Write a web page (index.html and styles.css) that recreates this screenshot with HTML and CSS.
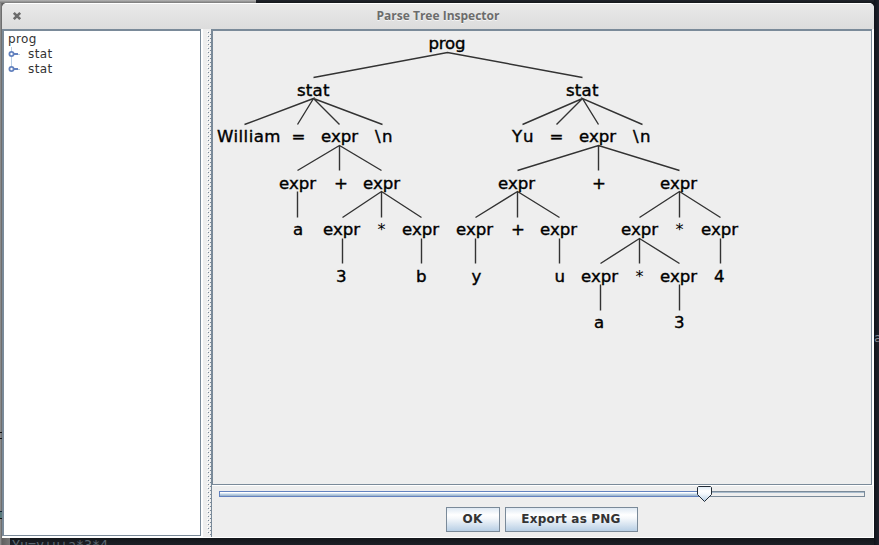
FILE: index.html
```
<!DOCTYPE html>
<html lang="en">
<head>
<meta charset="utf-8">
<title>Parse Tree Inspector</title>
<link rel="stylesheet" href="styles.css">
</head>
<body>
<div class="desktop">
  <div class="behind-light"></div>
  <div class="behind-marks"></div>
  <div class="behind-code">Yu=y+u+a*3*4</div>
  <div class="behind-char">a</div>
  <div class="window">
    <header class="titlebar">
      <svg class="close" width="10" height="10" viewBox="0 0 10 10"><path d="M1.8 1.8L8.2 8.2M8.2 1.8L1.8 8.2"/></svg>
      <h1>Parse Tree Inspector</h1>
    </header>
    <main class="content">
      <aside class="outline">
        <div class="row root">prog</div>
        <div class="row"><svg class="knob" width="12" height="15" viewBox="0 0 12 15"><path class="guide" d="M3.5 0V15"/><path class="arm" d="M5 7H10"/><path class="tip" d="M10 7.5H12"/><circle cx="3.5" cy="7" r="2.1"/></svg><span>stat</span></div>
        <div class="row"><svg class="knob" width="12" height="15" viewBox="0 0 12 15"><path class="guide" d="M3.5 0V7"/><path class="arm" d="M5 7H10"/><path class="tip" d="M10 7.5H12"/><circle cx="3.5" cy="7" r="2.1"/></svg><span>stat</span></div>
      </aside>
      <div class="divider"><svg width="5" height="504"><defs><pattern id="bumps" width="4" height="4" patternUnits="userSpaceOnUse" x="0" y="0"><path d="M1 1h1v1h-1zM3 3h1v1h-1z" fill="#7a8a99"/><path d="M0 0h1v1h-1zM2 2h1v1h-1z" fill="#fff"/></pattern></defs><rect width="5" height="504" fill="url(#bumps)"/></svg></div>
      <section class="viewer">
        <div class="canvas">
          <svg class="tree" width="658" height="453" viewBox="213 31 658 453">
            <g class="edges">
              <path d="M313.5 77.5L447.5 52.5L582.5 77.5"/>
              <path d="M244.5 124.5L313.5 98.5L297.5 124.5M339.5 124.5L313.5 98.5L382.5 124.5"/>
              <path d="M522.5 124.5L582.5 98.5L556.5 124.5M598.5 124.5L582.5 98.5L642.5 124.5"/>
              <path d="M297.5 170.5L339.5 145.5L381.5 170.5M339.5 145.5V170.5"/>
              <path d="M517.5 170.5L598.5 145.5L679.5 170.5M598.5 145.5V170.5"/>
              <path d="M297.5 191.5V217.5M342.5 217.5L381.5 191.5L421.5 217.5M381.5 191.5V217.5"/>
              <path d="M475.5 217.5L517.5 191.5L559.5 217.5M517.5 191.5V217.5"/>
              <path d="M639.5 217.5L679.5 191.5L720.5 217.5M679.5 191.5V217.5"/>
              <path d="M342.5 238.5V263.5M421.5 238.5V263.5M475.5 238.5V263.5M559.5 238.5V263.5M720.5 238.5V263.5"/>
              <path d="M600.5 263.5L639.5 238.5L679.5 263.5M639.5 238.5V263.5M600.5 284.5V310.5M679.5 284.5V310.5"/>
            </g>
            <g class="labels">
              <text x="428.5" y="49" textLength="37">prog</text>
              <text x="297" y="96" textLength="32.5">stat</text><text x="566" y="96" textLength="32.5">stat</text>
              <text x="217" y="142" textLength="63.5">William</text><text x="291.5" y="142">=</text><text x="321" y="142" textLength="37">expr</text><text x="375" y="142" textLength="17.5">\n</text>
              <text x="512" y="142" textLength="21.5">Yu</text><text x="549.5" y="142">=</text><text x="579" y="142" textLength="37">expr</text><text x="633" y="142" textLength="17.5">\n</text>
              <text x="279" y="189" textLength="37">expr</text><text x="334" y="189">+</text><text x="363" y="189" textLength="37">expr</text>
              <text x="498" y="189" textLength="37">expr</text><text x="592" y="189">+</text><text x="660" y="189" textLength="37">expr</text>
              <text x="293" y="235">a</text><text x="323" y="235" textLength="37">expr</text><text class="star" x="377.5" y="235">*</text><text x="402" y="235" textLength="37">expr</text>
              <text x="456" y="235" textLength="37">expr</text><text x="511" y="235">+</text><text x="540" y="235" textLength="37">expr</text>
              <text x="621" y="235" textLength="37">expr</text><text class="star" x="675.5" y="235">*</text><text x="701" y="235" textLength="37">expr</text>
              <text x="336" y="282">3</text><text x="416" y="282">b</text><text x="471.5" y="282">y</text><text x="554.5" y="282">u</text>
              <text x="581" y="282" textLength="37">expr</text><text class="star" x="635.5" y="282">*</text><text x="660" y="282" textLength="37">expr</text><text x="714" y="282">4</text>
              <text x="594" y="328">a</text><text x="674" y="328">3</text>
            </g>
          </svg>
        </div>
        <div class="slider">
          <div class="track"><div class="filled"></div></div>
          <svg class="thumb" width="15" height="17" viewBox="0 0 15 17"><defs><linearGradient id="tg" x1="0" y1="0" x2="0" y2="1"><stop offset="0" stop-color="#dce8f3"/><stop offset=".3" stop-color="#fff"/><stop offset=".5" stop-color="#f4f8fc"/><stop offset="1" stop-color="#b8cfe5"/></linearGradient></defs><path d="M1.5 .5H13.5L14.5 1.5V8.5L7.5 15.5L.5 8.5V1.5Z" fill="url(#tg)" stroke="#222b35"/></svg>
        </div>
        <div class="actions">
          <button class="ok">OK</button>
          <button class="export">Export as PNG</button>
        </div>
      </section>
    </main>
  </div>
</div>
</body>
</html>
```
FILE: styles.css
```
* { box-sizing: border-box; }
body { margin: 0; }
.desktop {
  position: relative;
  width: 879px;
  height: 545px;
  padding: 3px 0 0 2px;
  overflow: hidden;
  background: linear-gradient(90deg, transparent 874px, #10131a 874px, #1e212b 879px), linear-gradient(#20242b 0, #14171b 3px, #14171b 538px, #1c2026 545px);
}
.behind-light {
  position: absolute;
  left: 0;
  top: 0;
  width: 10px;
  height: 545px;
  background: linear-gradient(90deg, #999 0, #606060 2px, #777 10px);
}
.behind-light::after {
  content: "";
  position: absolute;
  left: 0;
  top: 0;
  width: 256px;
  height: 3px;
  background: linear-gradient(#b5b5b5, #777);
}
.behind-marks {
  position: absolute;
  left: 0;
  top: 432px;
  width: 2px;
  height: 87px;
  background: linear-gradient(#111 0 1px, transparent 1px 6px, #111 6px 7px, transparent 7px 79px, #123 79px 80px, #58797b 80px 86px, #111 86px);
}
.behind-code {
  position: absolute;
  left: 12px;
  top: 538px;
  font: 13.3px/16px "DejaVu Sans Mono", monospace;
  color: #5b6871;
}
.behind-char {
  position: absolute;
  left: 874px;
  top: 330px;
  font: 13px/16px "DejaVu Sans Mono", monospace;
  color: #858b93;
}
.window {
  position: relative;
  display: flex;
  flex-direction: column;
  width: 872px;
  height: 535px;
  border-radius: 5px 5px 0 0;
  overflow: hidden;
  background: #eee;
}
.titlebar {
  position: relative;
  display: flex;
  align-items: center;
  justify-content: center;
  height: 26px;
  background: linear-gradient(#e9e9e9, #dcdcdc);
  border-top: 1px solid #fff;
}
.titlebar h1 {
  margin: 0;
  padding-bottom: 1px;
  font: bold 12px/16px "Open Sans", sans-serif;
  color: #6c6c6c;
  text-shadow: 0 1px 0 #f4f4f4;
}
.close { position: absolute; left: 10px; top: 7px; }
.close path { stroke: #6c6c6c; stroke-width: 2.6; }
.content { display: flex; height: 509px; border-bottom: 1px solid #fff; }
.outline {
  width: 199px;
  height: 507px;
  padding: 1px 0 0 4px;
  border: solid #7a8a99;
  border-width: 2px 1px 1px 2px;
  background: #fff;
  box-shadow: 1px 1px 0 #fff;
  font: 12px/15px "DejaVu Sans", sans-serif;
  color: #333;
}
.row { display: flex; gap: 8px; height: 15px; }
.root { letter-spacing: .4px; }
.row span { letter-spacing: .4px; }
.knob { flex: none; }
.knob .guide { stroke: #b8cfe5; }
.knob .arm { stroke: #6382bf; stroke-width: 2; }
.knob .tip { stroke: #b8cfe5; }
.knob circle { fill: #fff; stroke: #6382bf; stroke-width: 1.8; }
.divider { width: 10px; padding: 2px 0 0 4px; border-left: 2px solid #fff; }
.divider svg { display: block; }
.viewer {
  display: flex;
  flex-direction: column;
  width: 663px;
  height: 508px;
  border-right: 1px solid #fff;
  border-left: 1px solid #7a8a99;
}
.canvas {
  width: 661px;
  height: 456px;
  margin-left: -1px;
  border: solid #7a8a99;
  border-width: 2px 1px 1px 2px;
  box-shadow: 1px 1px 0 #fff;
}
.tree { display: block; }
.edges { fill: none; stroke: #333; stroke-width: 1.4; }
.labels { font: 16.6px "DejaVu Sans", sans-serif; fill: #000; stroke: #000; stroke-width: .4; }
.labels .star { stroke-width: 0; font-size: 16px; }
.slider { position: relative; height: 22px; padding: 6px 8px 0 7px; }
.track { width: 646px; height: 6px; border: 1px solid #7a8a99; background: linear-gradient(#a9bccd 0 1px, #eee 1px); }
.filled {
  width: 486px;
  height: 6px;
  margin: -1px 0 0 -1px;
  border: 1px solid #6382bf;
  background: linear-gradient(#fff 0 1px, #dce8f3 1px 2px, #b8cfe5 2px 3px, #a3b8cc 3px);
}
.thumb { position: absolute; left: 485px; top: 1px; }
.actions { display: flex; justify-content: center; gap: 5px; padding-right: 2px; }
button {
  height: 25px;
  padding: 0;
  border: 1px solid #7a8a99;
  background: linear-gradient(#dfe9f3, #fff 30%, #f5f8fb 45%, #b8cfe5);
  font: bold 12px/23px "DejaVu Sans", sans-serif;
  letter-spacing: .2px;
  color: #333;
}
.ok { width: 54px; }
.export { width: 133px; }
```
